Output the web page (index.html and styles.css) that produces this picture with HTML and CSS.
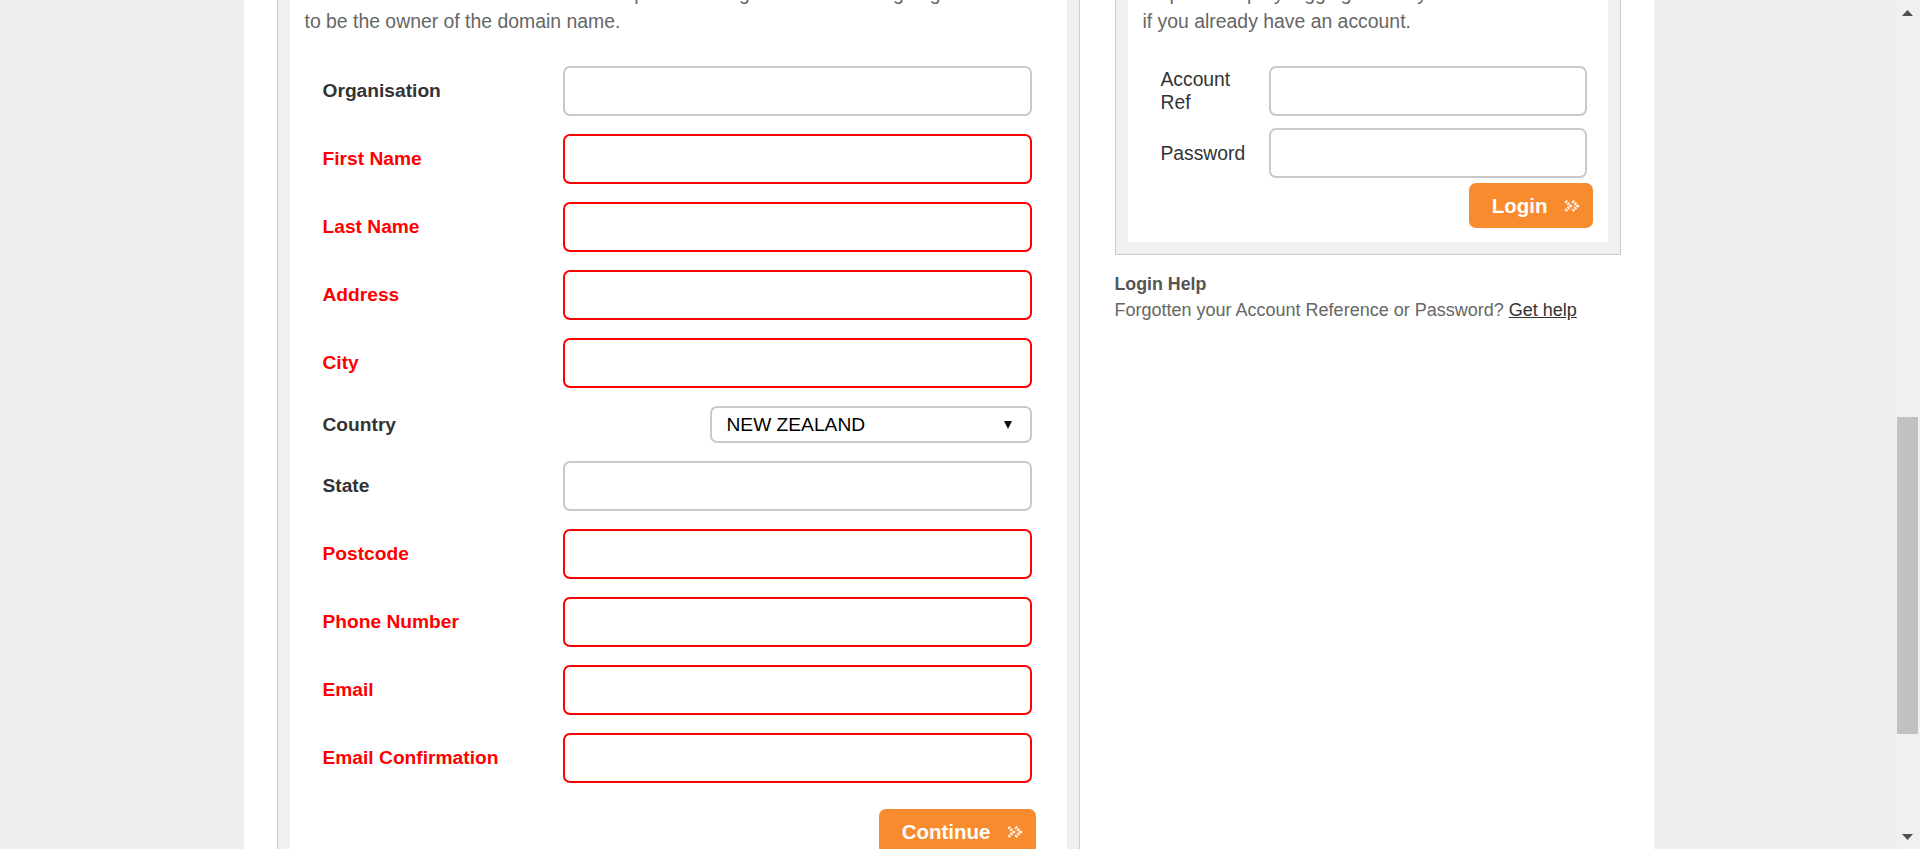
FILE: index.html
```html
<!DOCTYPE html>
<html lang="en">
<head>
<meta charset="utf-8">
<title>Domain Registration - Registrant Details</title>
<link rel="stylesheet" href="styles.css">
</head>
<body>
<div class="window">
  <div class="viewport" id="viewport">
    <div class="page">
      <div class="columns">
        <section class="panel">
          <div class="panel-inner">
            <p class="intro">Please enter the contact details of the person or organisation who is going<br>to be the owner of the domain name.</p>

            <form class="reg-form" id="reg-form">
              <label class="field-label" for="org">Organisation</label>
              <input class="field" id="org" type="text">

              <label class="field-label req" for="first">First Name</label>
              <input class="field req" id="first" type="text">

              <label class="field-label req" for="last">Last Name</label>
              <input class="field req" id="last" type="text">

              <label class="field-label req" for="addr">Address</label>
              <input class="field req" id="addr" type="text">

              <label class="field-label req" for="city">City</label>
              <input class="field req" id="city" type="text">

              <label class="field-label" for="country">Country</label>
              <div class="select-wrap">
                <select class="select" id="country">
                  <option>NEW ZEALAND</option>
                  <option>AUSTRALIA</option>
                </select>
              </div>

              <label class="field-label" for="state">State</label>
              <input class="field" id="state" type="text">

              <label class="field-label req" for="post">Postcode</label>
              <input class="field req" id="post" type="text">

              <label class="field-label req" for="phone">Phone Number</label>
              <input class="field req" id="phone" type="text">

              <label class="field-label req" for="email">Email</label>
              <input class="field req" id="email" type="text">

              <label class="field-label req" for="email2">Email Confirmation</label>
              <input class="field req" id="email2" type="text">
            </form>

            <div class="actions actions-main">
              <button class="btn" type="button">Continue
                <svg class="btn-icon" viewBox="0 0 16 12" aria-hidden="true"><path d="M1.5 1 L6.5 6 L1.5 11 M8.5 1 L13.5 6 L8.5 11" fill="none" stroke="#fff" stroke-width="3" stroke-dasharray="2 1" opacity="0.92"/></svg>
              </button>
            </div>
          </div>
        </section>

        <aside class="side">
          <div class="login-box">
            <div class="login-inner">
              <p class="intro">Skip this step by logging in with your details<br>if you already have an account.</p>
              <form class="login-form">
                <label class="login-label" for="acc">Account Ref</label>
                <input class="field" id="acc" type="text">
                <label class="login-label" for="pw">Password</label>
                <input class="field" id="pw" type="password">
              </form>
              <div class="actions actions-login">
                <button class="btn" type="button">Login
                  <svg class="btn-icon" viewBox="0 0 16 12" aria-hidden="true"><path d="M1.5 1 L6.5 6 L1.5 11 M8.5 1 L13.5 6 L8.5 11" fill="none" stroke="#fff" stroke-width="3" stroke-dasharray="2 1" opacity="0.92"/></svg>
                </button>
              </div>
            </div>
          </div>
          <div class="login-help">
            <h3 class="help-title">Login Help</h3>
            <p class="help-text">Forgotten your Account Reference or Password? <a href="#" class="help-link">Get help</a></p>
          </div>
        </aside>
      </div>
    </div>
  </div>

  <div class="scrollbar" aria-hidden="true">
    <div class="sb-btn sb-up">
      <svg class="sb-arrow" viewBox="0 0 11 6"><polygon points="0,6 5.5,0 11,6" fill="#505050"/></svg>
    </div>
    <div class="sb-track">
      <div class="sb-thumb"></div>
    </div>
    <div class="sb-btn sb-down">
      <svg class="sb-arrow" viewBox="0 0 11 6"><polygon points="0,0 11,0 5.5,6" fill="#505050"/></svg>
    </div>
  </div>
</div>
<script src="script.js"></script>
</body>
</html>
```

FILE: styles.css
```css
html, body {
  height: 100%;
}
body {
  margin: 0;
  background: #efefef;
  font-family: "Liberation Sans", Arial, sans-serif;
  color: #333;
}

.window {
  display: flex;
  height: 100vh;
  overflow: hidden;
}
.viewport {
  flex: 1 1 auto;
  min-width: 0;
  overflow: hidden;
}

/* ---------- fake window scrollbar ---------- */
.scrollbar {
  flex: 0 0 23px;
  box-sizing: border-box;
  padding-right: 2px;
  display: flex;
  flex-direction: column;
  background: #f0f0f0;
}
.sb-btn {
  flex: 0 0 23px;
  display: flex;
  justify-content: center;
  align-items: flex-start;
  box-sizing: border-box;
}
.sb-up {
  padding-top: 10px;
}
.sb-down {
  padding-top: 8px;
}
.sb-arrow {
  width: 11px;
  height: 6px;
  display: block;
}
.sb-track {
  flex: 1 1 auto;
  padding-top: 394px;
}
.sb-thumb {
  height: 317px;
  background: #c1c1c1;
}

/* ---------- page ---------- */
.page {
  width: 1410px;
  margin: 0 auto;
  background: #fff;
  min-height: 100%;
}

.columns {
  display: flex;
  align-items: flex-start;
  gap: 35px;
  padding: 0 33px 40px;
}

.panel {
  flex: 0 0 803px;
  box-sizing: border-box;
  border: 1px solid #ccc;
  padding: 12px;
  background: #f0f0f0;
}
.panel-inner {
  background: #fff;
  padding: 20px 15px 24px;
}
.intro {
  margin: 0 0 31px;
  font-size: 19.4px;
  line-height: 28px;
  color: #666;
}

.reg-form {
  display: grid;
  grid-template-columns: 240px 1fr;
  row-gap: 18px;
  align-items: center;
  margin: 0 20px 0 18px;
}
.field-label {
  font-size: 19.2px;
  font-weight: bold;
  color: #333;
}
.field-label.req {
  color: #f00;
}
.field {
  box-sizing: border-box;
  display: block;
  width: 100%;
  height: 50px;
  margin: 0;
  padding: 0 12px;
  border: 2px solid #c9c9c9;
  border-radius: 7px;
  background: #fff;
  font-family: inherit;
  font-size: 19.2px;
  color: #000;
}
.field.req {
  border-color: #f00;
}
.select-wrap {
  justify-self: end;
  width: 322px;
  position: relative;
}
.select {
  -webkit-appearance: none;
  appearance: none;
  box-sizing: border-box;
  display: block;
  width: 100%;
  height: 37px;
  margin: 0;
  padding: 0 30px 0 15px;
  border: 2px solid #c9c9c9;
  border-radius: 7px;
  background: #fff;
  font-family: inherit;
  font-size: 19.2px;
  color: #000;
}
.select-wrap::after {
  content: "";
  position: absolute;
  right: 20px;
  top: 15px;
  border-left: 4px solid transparent;
  border-right: 4px solid transparent;
  border-top: 8px solid #111;
  pointer-events: none;
}

.actions {
  display: flex;
  justify-content: flex-end;
}
.actions-main {
  margin: 26px 16px 0 0;
}
.actions-login {
  margin-top: 5px;
}
.btn {
  display: inline-flex;
  align-items: center;
  gap: 16px;
  height: 45px;
  margin: 0;
  padding: 0 13px 0 23px;
  border: 0;
  border-radius: 7px;
  background: #f98b2f;
  color: #fff;
  font-family: inherit;
  font-size: 20.5px;
  font-weight: bold;
  cursor: pointer;
}
.btn-icon {
  width: 16px;
  height: 12px;
  display: block;
}

/* ---------- side column ---------- */
.side {
  flex: 0 0 506px;
}
.login-box {
  border: 1px solid #ccc;
  padding: 12px;
  background: #f0f0f0;
}
.login-inner {
  background: #fff;
  padding: 20px 15px 14px;
}
.login-form {
  display: grid;
  grid-template-columns: 108px 1fr;
  row-gap: 12px;
  align-items: center;
  margin: 0 6px 0 18px;
}
.login-label {
  padding-right: 12px;
  font-size: 19.3px;
  line-height: 23px;
  color: #333;
}
.login-help {
  margin-top: 16px;
}
.help-title {
  margin: 0;
  font-size: 17.8px;
  line-height: 26px;
  font-weight: bold;
  color: #555;
}
.help-text {
  margin: 0;
  font-size: 18px;
  line-height: 26px;
  color: #666;
}
.help-link {
  color: #333;
  text-decoration: underline;
}
```

FILE: script.js
```js
function placeView() {
  var view = document.getElementById('viewport');
  var form = document.getElementById('reg-form');
  if (!view || !form) return;
  var offset = form.getBoundingClientRect().top - view.getBoundingClientRect().top + view.scrollTop;
  view.scrollTop = Math.round(offset - 66);
}
placeView();
window.addEventListener('load', placeView);
```
